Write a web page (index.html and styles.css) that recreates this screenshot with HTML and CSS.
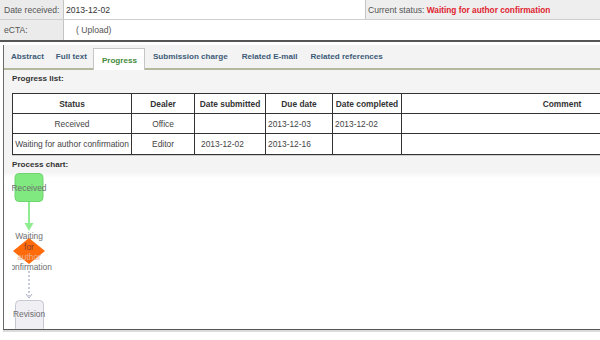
FILE: index.html
```html
<!DOCTYPE html>
<html>
<head>
<meta charset="utf-8">
<link rel="stylesheet" href="styles.css">
</head>
<body>
<div class="info">
  <div class="info-row r1">
    <div class="lbl">Date received:</div>
    <div class="val">2013-12-02</div>
    <div class="status">Current status: <span class="red">Waiting for author confirmation</span></div>
  </div>
  <div class="info-row r2">
    <div class="lbl">eCTA:</div>
    <div class="val upload">( Upload)</div>
  </div>
</div>
<div class="panel">
  <div class="tabs">
    <div class="tab t-abstract">Abstract</div>
    <div class="tab t-full">Full text</div>
    <div class="tab active">Progress</div>
    <div class="tab t-sub">Submission charge</div>
    <div class="tab t-mail">Related E-mail</div>
    <div class="tab t-ref">Related references</div>
  </div>
  <div class="content">
    <div class="section-title">Progress list:</div>
    <div class="table-wrap">
      <table class="plist">
        <tr class="head">
          <th class="c1">Status</th>
          <th class="c2">Dealer</th>
          <th class="c3">Date submitted</th>
          <th class="c4">Due date</th>
          <th class="c5">Date completed</th>
          <th class="c6">Comment</th>
        </tr>
        <tr class="row">
          <td class="center">Received</td>
          <td class="center">Office</td>
          <td class="date sub"></td>
          <td class="date">2013-12-03</td>
          <td class="date">2013-12-02</td>
          <td></td>
        </tr>
        <tr class="row last">
          <td class="center">Waiting for author confirmation</td>
          <td class="center">Editor</td>
          <td class="date sub">2013-12-02</td>
          <td class="date">2013-12-16</td>
          <td class="date"></td>
          <td></td>
        </tr>
      </table>
    </div>
    <div class="section-title chart-title">Process chart:</div>
    <div class="chart">
      <svg class="chart-svg" width="588" height="157" viewBox="0 0 588 157">
        <rect x="3" y="1.5" width="28" height="28" rx="4" fill="#80ea80" stroke="#6fd46f"/>
        <text x="17" y="19" class="ct" text-anchor="middle">Received</text>
        <line x1="17" y1="30" x2="17" y2="53" stroke="#90ec90" stroke-width="2"/>
        <polygon points="12.5,51 21.5,51 17,59" fill="#90ec90"/>
        <polygon points="17,66 33,79 17,92 1,79" fill="#ff6a0a"/>
        <text x="17" y="67" class="ct" text-anchor="middle">Waiting</text>
        <text x="17" y="77.5" class="ct dk" text-anchor="middle">for</text>
        <text x="17" y="88" class="ct lt" text-anchor="middle">author</text>
        <text x="17" y="98" class="ct" text-anchor="middle">confirmation</text>
        <line x1="17" y1="99" x2="17" y2="124" stroke="#b4b8cc" stroke-width="1.5" stroke-dasharray="2 2"/>
        <polyline points="14,122 17,126 20,122" fill="none" stroke="#a8acc0" stroke-width="1"/>
        <rect x="3.5" y="128.5" width="28" height="32" rx="4" fill="#efeff4" stroke="#c6c8d2"/>
        <text x="17" y="145" class="ct" text-anchor="middle">Revision</text>
      </svg>
    </div>
  </div>
</div>
</body>
</html>
```

FILE: styles.css
```css
html, body {
  margin: 0;
  padding: 0;
  background: #ffffff;
}
body {
  width: 600px;
  height: 340px;
  overflow: hidden;
  font-family: "Liberation Sans", Arial, sans-serif;
  font-size: 8.6px;
  color: #333;
}
.info {
  border-bottom: 2px solid #555;
}
.info-row {
  display: grid;
  grid-template-columns: 64px 301px 1fr;
  height: 20px;
}
.info-row.r1 {
  border-bottom: 1px solid #cfcfcf;
  height: 19px;
}
.lbl {
  background: #ebebeb;
  color: #555;
  border-right: 1px solid #c4c4c4;
  padding-left: 4px;
  display: flex;
  align-items: center;
}
.val {
  display: flex;
  align-items: center;
  padding-left: 2px;
  color: #333;
}
.val.upload {
  grid-column: 2 / 4;
  padding-left: 12px;
  color: #555;
}
.status {
  background: #eeeeee;
  border-left: 1px solid #c4c4c4;
  padding-left: 2px;
  display: flex;
  align-items: center;
  color: #555;
  white-space: pre;
}
.red {
  color: #e0232e;
  font-weight: bold;
  font-size: 8.3px;
}
.panel {
  margin-top: 3px;
  margin-left: 3px;
  border-left: 1px solid #6a6a6a;
  border-bottom: 1px solid #555;
  box-shadow: 0 2px 0 #dcdcdc;
}
.tabs {
  height: 23px;
  background: #f3f3f3;
  border-bottom: 2px solid #b4b99e;
  display: flex;
  align-items: flex-end;
  padding-left: 7px;
  font-weight: bold;
  font-size: 8.1px;
  color: #3d5b78;
}
.tab {
  height: 19px;
  display: flex;
  align-items: center;
  margin-bottom: 2px;
}
.t-abstract { margin-right: 12px; }
.t-full { margin-right: 6px; }
.tab.active {
  background: #ffffff;
  border: 1px solid #c6c6c6;
  border-bottom: none;
  color: #3f8a3a;
  padding: 1px 7px 0 8px;
  margin-bottom: -2px;
  height: 20px;
  margin-right: 8px;
}
.t-sub { margin-right: 14px; }
.t-mail { margin-right: 13px; }
.content {
  background: #f4f4f4;
  padding-left: 8px;
}
.section-title {
  height: 16px;
  display: flex;
  align-items: center;
  font-weight: bold;
  font-size: 8.1px;
  color: #333;
}
.table-wrap {
  margin-top: 7px;
  width: 588px;
  overflow: hidden;
  padding-bottom: 1px;
}
.plist {
  border-collapse: collapse;
  width: 711px;
  table-layout: fixed;
  background: #ffffff;
  font-size: 8.4px;
  color: #444;
  box-shadow: 0 1px 0 #cfcfcf;
}
.plist th, .plist td {
  border: 1px solid #333;
  padding: 0;
  white-space: nowrap;
  overflow: hidden;
}
.plist th {
  font-weight: bold;
  color: #333;
  height: 19px;
  text-align: center;
}
.plist td { height: 19px; }
.plist tr.last td { height: 20px; }
.c1 { width: 118px; }
.c2 { width: 62px; }
.c3 { width: 70px; }
.c4 { width: 66px; }
.c5 { width: 68px; }
.center { text-align: center; }
.date { text-align: left; padding-left: 2px !important; }
.date.sub { padding-left: 6px !important; }
.chart-title {
  margin-top: 0;
}
.chart {
  margin-left: -8px;
  height: 157px;
  background: linear-gradient(#f4f4f4 0px, #ffffff 6px, #ffffff 100%);
  padding-left: 8px;
  overflow: hidden;
}
.chart-svg {
  display: block;
  overflow: hidden;
}
.ct {
  font-family: "Liberation Sans", Arial, sans-serif;
  font-size: 8.4px;
  fill: #6e6e6e;
}
.ct.dk { fill: #8a3a2a; }
.ct.lt { fill: #e8b090; }
```
